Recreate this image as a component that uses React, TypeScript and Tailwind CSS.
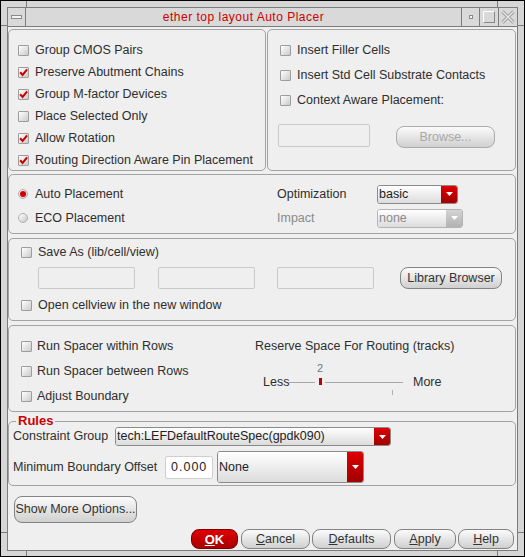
import type { ReactNode } from 'react';

const sans = "font-['Liberation_Sans',Arial,sans-serif]";

function Check({ on }: { on?: boolean }) {
  return (
    <span className="flex h-[11px] w-[11px] shrink-0 items-center justify-center rounded-[1px] border border-[#9d9d9d] bg-linear-to-br from-white to-[#cbcbcb]">
      {on && (
        <svg width="10" height="9" viewBox="0 0 10 9">
          <path d="M1.2 4.2L4 7.2L9 1" stroke="#cc0000" strokeWidth="2.2" fill="none" />
        </svg>
      )}
    </span>
  );
}

function Radio({ on }: { on?: boolean }) {
  return (
    <span className="flex h-[10px] w-[10px] shrink-0 items-center justify-center rounded-full border border-[#b0b0b0] bg-linear-to-br from-white to-[#c8c8c8]">
      {on && <span className="h-[6px] w-[6px] rounded-full bg-[#d40000]" />}
    </span>
  );
}

function Arrow() {
  return (
    <svg width="7" height="4" viewBox="0 0 7 4">
      <path d="M0 0h7L3.5 4z" fill="white" />
    </svg>
  );
}

function Drop({ text, className, disabled }: { text: string; className: string; disabled?: boolean }) {
  return (
    <div
      className={`flex overflow-hidden rounded-[3px] border ${disabled ? 'border-[#b4b4b4]' : 'border-[#8a8a8a]'} ${className}`}
    >
      <div
        className={`flex flex-1 items-center bg-linear-to-b from-white to-[#dcdcdc] pl-[1px] ${disabled ? 'text-[#8a8a8a]' : 'text-[#222]'}`}
      >
        {text}
      </div>
      <div
        className={`flex w-[16px] items-center justify-center ${disabled ? 'bg-linear-to-b from-[#d4d4d4] to-[#b2b2b2]' : 'bg-linear-to-b from-[#dd0000] to-[#a30000]'}`}
      >
        <Arrow />
      </div>
    </div>
  );
}

function Btn({ children, className, disabled }: { children: ReactNode; className: string; disabled?: boolean }) {
  return (
    <div
      className={`flex items-center justify-center rounded-[8px] border bg-linear-to-b from-[#fbfbfb] to-[#d0d0d0] ${disabled ? 'border-[#ababab] text-[#a8a8a8]' : 'border-[#838383] text-[#333]'} ${className}`}
    >
      {children}
    </div>
  );
}

function Field({ className }: { className: string }) {
  return <div className={`rounded-[2px] border border-[#c9c9c9] bg-[#efefef] ${className}`} />;
}

function CheckRow({ label, on, h, gap }: { label: string; on?: boolean; h: string; gap: string }) {
  return (
    <div className={`flex items-center ${h} ${gap}`}>
      <Check on={on} />
      <span>{label}</span>
    </div>
  );
}

export default function App() {
  return (
    <div className={`relative h-[557px] w-[525px] border border-black bg-[#d6d6d6] px-[6px] pb-[5px] pt-[6px] text-[12.5px] leading-none text-[#2e2e2e] ${sans}`}>
      {/* frame resize handles */}
      <span className="absolute left-[25px] top-0 h-[6px] w-px bg-[#7c7c7c]" />
      <span className="absolute right-[26px] top-0 h-[6px] w-px bg-[#7c7c7c]" />
      <span className="absolute bottom-0 left-[25px] h-[5px] w-px bg-[#7c7c7c]" />
      <span className="absolute bottom-0 right-[26px] h-[5px] w-px bg-[#7c7c7c]" />
      <span className="absolute left-0 top-[24px] h-px w-[6px] bg-[#7c7c7c]" />
      <span className="absolute right-0 top-[24px] h-px w-[6px] bg-[#7c7c7c]" />
      <span className="absolute bottom-[23px] left-0 h-px w-[6px] bg-[#7c7c7c]" />
      <span className="absolute bottom-[23px] right-0 h-px w-[6px] bg-[#7c7c7c]" />

      <div className="flex h-full flex-col border border-[#7c7c7c]">
        {/* title bar */}
        <div className="flex h-[19px] border-b border-[#7c7c7c] bg-[#d9d9d9]">
          <div className="flex w-[18px] items-center justify-center border-r border-[#7c7c7c]">
            <span className="h-[4px] w-[11px] border border-[#8a8a8a] bg-[#f4f4f4]" />
          </div>
          <div className="flex flex-1 items-center justify-center text-[12px] tracking-[0.5px] text-[#cc0000]">
            ether top layout Auto Placer
          </div>
          <div className="flex w-[18px] items-center justify-center border-l border-[#7c7c7c]">
            <span className="h-[4px] w-[4px] border border-[#8a8a8a] bg-[#f4f4f4]" />
          </div>
          <div className="flex w-[19px] items-center justify-center border-l border-[#7c7c7c]">
            <span className="h-[12px] w-[12px] border border-[#8a8a8a] border-l-white border-t-white" />
          </div>
          <div className="flex w-[19px] items-center justify-center border-l border-[#7c7c7c]">
            <svg width="14" height="14" viewBox="0 0 14 14">
              <path d="M1.5 1.5L12.5 12.5M12.5 1.5L1.5 12.5" stroke="#9c9c9c" strokeWidth="3.2" fill="none" />
              <path d="M1.5 1.5L12.5 12.5M12.5 1.5L1.5 12.5" stroke="#e6e6e6" strokeWidth="1.4" fill="none" />
            </svg>
          </div>
        </div>

        {/* content */}
        <div className="flex flex-1 flex-col bg-[#efefef] pb-[1px] pr-[1px] pt-[2px]">
          {/* top row */}
          <div className="flex gap-[1px]">
            <div className="h-[142px] w-[258px] rounded-[5px] border border-[#a3a3a3] pl-[9px] pt-[9px]">
              <CheckRow label="Group CMOS Pairs" h="h-[22px]" gap="gap-[6px]" />
              <CheckRow label="Preserve Abutment Chains" on h="h-[22px]" gap="gap-[6px]" />
              <CheckRow label="Group M-factor Devices" on h="h-[22px]" gap="gap-[6px]" />
              <CheckRow label="Place Selected Only" h="h-[22px]" gap="gap-[6px]" />
              <CheckRow label="Allow Rotation" on h="h-[22px]" gap="gap-[6px]" />
              <CheckRow label="Routing Direction Aware Pin Placement" on h="h-[22px]" gap="gap-[6px]" />
            </div>
            <div className="h-[142px] w-[249px] rounded-[5px] border border-[#a3a3a3] pl-[12px] pt-[8px]">
              <CheckRow label="Insert Filler Cells" h="h-[25px]" gap="gap-[6px]" />
              <CheckRow label="Insert Std Cell Substrate Contacts" h="h-[25px]" gap="gap-[6px]" />
              <CheckRow label="Context Aware Placement:" h="h-[25px]" gap="gap-[6px]" />
              <div className="-ml-[2px] mt-[11px] flex items-start">
                <Field className="h-[23px] w-[92px]" />
                <Btn disabled className="ml-[26px] mt-[2px] h-[22px] w-[99px]">
                  Browse...
                </Btn>
              </div>
            </div>
          </div>

          {/* placement mode */}
          <div className="mt-[3px] h-[60px] rounded-[5px] border border-[#a3a3a3] pl-[9px] pt-[7px]">
            <div className="flex h-[24px] items-center">
              <div className="flex w-[259px] items-center gap-[7px]">
                <Radio on />
                <span>Auto Placement</span>
              </div>
              <span className="w-[100px]">Optimization</span>
              <Drop text="basic" className="h-[19px] w-[81px]" />
            </div>
            <div className="flex h-[24px] items-center">
              <div className="flex w-[259px] items-center gap-[7px]">
                <Radio />
                <span>ECO Placement</span>
              </div>
              <span className="w-[100px] text-[#8a8a8a]">Impact</span>
              <Drop text="none" disabled className="h-[19px] w-[86px]" />
            </div>
          </div>

          {/* save as */}
          <div className="mt-[4px] h-[83px] rounded-[5px] border border-[#a3a3a3] pl-[12px] pt-[3px]">
            <CheckRow label="Save As (lib/cell/view)" h="h-[20px]" gap="gap-[6px]" />
            <div className="mt-[4px] flex h-[24px] items-center pl-[17px]">
              <Field className="h-[22px] w-[97px]" />
              <Field className="ml-[23px] h-[22px] w-[97px]" />
              <Field className="ml-[22px] h-[22px] w-[97px]" />
              <Btn className="ml-[26px] h-[22px] w-[102px]">Library Browser</Btn>
            </div>
            <div className="mt-[5px]">
              <CheckRow label="Open cellview in the new window" h="h-[20px]" gap="gap-[6px]" />
            </div>
          </div>

          {/* spacer */}
          <div className="mt-[4px] flex h-[87px] rounded-[5px] border border-[#a3a3a3] pl-[12px] pt-[8px]">
            <div className="w-[234px]">
              <CheckRow label="Run Spacer within Rows" h="h-[25px]" gap="gap-[5px]" />
              <CheckRow label="Run Spacer between Rows" h="h-[25px]" gap="gap-[5px]" />
              <CheckRow label="Adjust Boundary" h="h-[25px]" gap="gap-[5px]" />
            </div>
            <div className="flex flex-col">
              <div className="flex h-[25px] items-center">Reserve Space For Routing (tracks)</div>
              <div className="ml-[62px] mt-[2px] flex h-[14px] items-center text-[11px] text-[#777]">2</div>
              <div className="flex h-[14px] items-center pl-[8px]">
                <span className="w-[25px]">Less</span>
                <div className="flex h-[14px] w-[115px] items-center">
                  <span className="h-px w-[27px] bg-[#a8a8a8]" />
                  <span className="flex h-[8px] w-[10px] justify-center">
                    <span className="h-[7px] w-[3px] bg-[#c00000]" />
                  </span>
                  <span className="h-px flex-1 bg-[#a8a8a8]" />
                </div>
                <span className="ml-[10px]">More</span>
              </div>
              <span className="ml-[137px] mt-[1px] h-[5px] w-px bg-[#b0b0b0]" />
            </div>
          </div>

          {/* rules */}
          <fieldset className="mt-[2px] rounded-[5px] border border-[#a3a3a3] px-[4px] pb-[2px]">
            <legend className="ml-[3px] px-[2px] text-[13px] font-bold leading-[14px] text-[#cc0000]">Rules</legend>
            <div className="-mt-[1px] flex h-[19px] items-center">
              <span className="w-[102px]">Constraint Group</span>
              <Drop text="tech:LEFDefaultRouteSpec(gpdk090)" className="h-[19px] w-[276px]" />
            </div>
            <div className="mt-[5px] flex h-[32px] items-center">
              <span className="w-[152px]">Minimum Boundary Offset</span>
              <div className="flex h-[23px] w-[48px] items-center rounded-[2px] border border-[#cfcfcf] bg-white pl-[5px] tracking-[1px] text-[#222]">
                0.000
              </div>
              <Drop text="None" className="ml-[4px] h-[32px] w-[147px]" />
            </div>
          </fieldset>

          <Btn className="ml-[6px] mt-[10px] h-[27px] w-[123px]">Show More Options...</Btn>

          {/* dialog buttons */}
          <div className="mt-[6px] flex h-[20px] justify-end pr-[2px]">
            <div className="flex w-[47px] items-center justify-center rounded-[8px] border border-[#7a0000] bg-linear-to-b from-[#e00000] to-[#a80000] text-[13px] font-bold text-white">
              <span>
                <span className="underline">O</span>K
              </span>
            </div>
            <Btn className="ml-[3px] w-[69px]">
              <span>
                <span className="underline">C</span>ancel
              </span>
            </Btn>
            <Btn className="ml-[2px] w-[79px]">
              <span>
                <span className="underline">D</span>efaults
              </span>
            </Btn>
            <Btn className="ml-[3px] w-[62px]">
              <span>
                <span className="underline">A</span>pply
              </span>
            </Btn>
            <Btn className="ml-[2px] w-[56px]">
              <span>
                <span className="underline">H</span>elp
              </span>
            </Btn>
          </div>
        </div>
      </div>
    </div>
  );
}
